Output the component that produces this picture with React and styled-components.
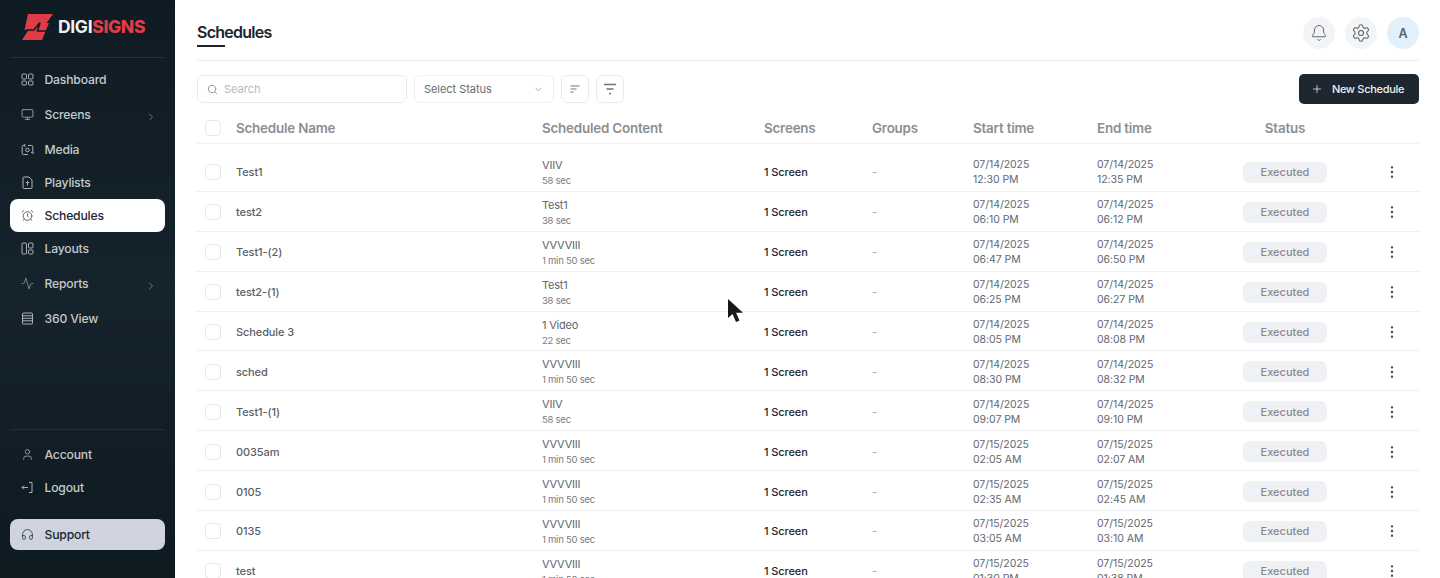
import React from "react";
import styled, { createGlobalStyle } from "styled-components";
import {
  Monitor,
  AlarmClock,
  Activity,
  User,
  Headphones,
  Bell,
  Settings,
  Search,
  ChevronRight,
  ChevronDown,
  Plus,
  EllipsisVertical,
} from "lucide-react";

const GlobalStyle = createGlobalStyle`
  html, body {
    margin: 0;
    height: 578px;
    overflow: hidden;
    background: #fff;
    font-family: Inter, "Noto Sans", sans-serif;
  }
  * { box-sizing: border-box; }
`;

const Shell = styled.div`
  display: flex;
  height: 578px;
  overflow: hidden;
  position: relative;
`;

const Sidebar = styled.aside`
  width: 175px;
  flex: none;
  display: flex;
  flex-direction: column;
  padding: 0 10px 28px;
  background: linear-gradient(180deg, #0f1b22 0%, #15232c 50%, #0e1a20 100%);
`;

const Brand = styled.div`
  height: 58px;
  display: flex;
  align-items: center;
  gap: 5px;
  padding: 0 0 4px 12px;
  border-bottom: 1px solid #22303a;
`;

const BrandText = styled.span`
  font-size: 17.5px;
  font-weight: 700;
  letter-spacing: -0.35px;
  color: #f0f1f2;
  & b {
    color: #df3c46;
    font-weight: 800;
  }
`;

const Nav = styled.nav`
  display: flex;
  flex-direction: column;
  padding-top: 5px;
`;

const NavItem = styled.div`
  display: flex;
  align-items: center;
  height: ${(p) => (p.$tall ? "37px" : "33px")};
  padding: 0 11px;
  gap: 10.5px;
  font-size: 12.2px;
  font-weight: 500;
  letter-spacing: -0.2px;
  border-radius: 8px;
  color: ${(p) => (p.$active ? "#1a2630" : "#c3c9cd")};
  background: ${(p) => (p.$active ? "#fff" : "transparent")};
  & > svg:first-child {
    flex: none;
    color: ${(p) => (p.$active ? "#3a444c" : "#aab2b7")};
  }
`;

const Arrow = styled(ChevronRight)`
  margin-left: auto;
  margin-top: 4px;
  margin-right: -3px;
  color: #a3abb0;
`;

const BottomNav = styled.div`
  margin-top: auto;
  border-top: 1px solid #22303a;
  padding-top: 8px;
  display: flex;
  flex-direction: column;
`;

const SupportButton = styled(NavItem)`
  margin-top: 15px;
  height: 31px;
  background: #cfd3dd;
  color: #1a2630;
  & > svg:first-child {
    color: #2a343c;
  }
`;

const Main = styled.main`
  flex: 1;
  min-width: 0;
  padding: 0 21px 0 22px;
`;

const Header = styled.header`
  height: 61px;
  display: flex;
  align-items: flex-start;
  justify-content: space-between;
  border-bottom: 1px solid #ebecee;
`;

const Title = styled.h1`
  margin: 22px 0 0;
  padding-bottom: 2px;
  position: relative;
  font-size: 16px;
  line-height: 21px;
  font-weight: 600;
  letter-spacing: -0.75px;
  color: #1c232b;
  &::after {
    content: "";
    position: absolute;
    left: 0;
    bottom: -2px;
    width: 28px;
    height: 2px;
    background: #1c232b;
  }
`;

const HeaderActions = styled.div`
  display: flex;
  gap: 10px;
  padding-top: 17px;
`;

const RoundButton = styled.div`
  width: 32px;
  height: 32px;
  border-radius: 50%;
  display: flex;
  align-items: center;
  justify-content: center;
  background: ${(p) => (p.$avatar ? "#e1f0fa" : "#f3f4f5")};
  color: #59636c;
  font-size: 12.5px;
  font-weight: 600;
`;

const Toolbar = styled.div`
  display: flex;
  align-items: center;
  gap: 7px;
  margin-top: 13px;
  height: 30px;
`;

const SearchBox = styled.div`
  width: 210px;
  height: 28px;
  display: flex;
  align-items: center;
  gap: 6px;
  padding: 0 9px;
  border: 1px solid #e9eaec;
  border-radius: 6px;
  font-size: 11px;
  color: #b5b9bd;
`;

const StatusSelect = styled.div`
  width: 140px;
  height: 28px;
  display: flex;
  align-items: center;
  justify-content: space-between;
  padding: 0 9px;
  border: 1px solid #eff0f1;
  border-radius: 6px;
  font-size: 11px;
  letter-spacing: -0.05px;
  color: #656b71;
`;

const IconButton = styled.div`
  width: 28px;
  height: 28px;
  display: flex;
  align-items: center;
  justify-content: center;
  border: 1px solid #eaebed;
  border-radius: 6px;
  color: #70767c;
`;

const NewButton = styled.button`
  margin-left: auto;
  width: 120px;
  height: 30px;
  display: flex;
  align-items: center;
  justify-content: center;
  gap: 9px;
  padding: 0 3px 0 0;
  border: 0;
  border-radius: 5px;
  background: #1e2730;
  color: #eef0f1;
  font-family: inherit;
  font-size: 11px;
  font-weight: 500;
  letter-spacing: -0.3px;
`;

const columns = "39px 306px 222px 108px 101px 124px 124px 128px 1fr";

const HeadRow = styled.div`
  display: grid;
  grid-template-columns: ${columns};
  align-items: center;
  height: 32px;
  margin: 8px 0;
  border-bottom: 1px solid #eff0f1;
  font-size: 13.4px;
  font-weight: 600;
  letter-spacing: -0.2px;
  color: #8b8f93;
`;

const Row = styled.div`
  display: grid;
  grid-template-columns: ${columns};
  align-items: center;
  height: 39.9px;
  padding-top: 2px;
  border-bottom: 1px solid #eeeff0;
  font-size: 11px;
  color: #60656b;
`;

const CheckCell = styled.div`
  padding-left: 8px;
`;

const Checkbox = styled.div`
  width: 16px;
  height: 16px;
  border: 1.5px solid #e6e7e9;
  border-radius: 4px;
  background: #fff;
`;

const Name = styled.div`
  font-size: 11px;
  font-weight: 500;
  letter-spacing: -0.1px;
  color: #5b6066;
`;

const Stack = styled.div`
  display: flex;
  flex-direction: column;
  padding-top: 1px;
  line-height: 15px;
  letter-spacing: -0.2px;
`;

const Small = styled.span`
  font-size: 9.5px;
  letter-spacing: -0.25px;
  color: #777c81;
`;

const ScreensCell = styled.div`
  font-size: 11px;
  font-weight: 500;
  letter-spacing: -0.1px;
  color: #23282e;
`;

const Dash = styled.div`
  color: #a0a4a8;
`;

const Time = styled.div`
  font-size: 10.5px;
  line-height: 15px;
  letter-spacing: -0.05px;
  color: #62676d;
`;

const StatusHead = styled.div`
  text-align: center;
`;

const StatusCell = styled.div`
  display: flex;
  justify-content: center;
`;

const Pill = styled.span`
  width: 84px;
  height: 21px;
  display: flex;
  align-items: center;
  justify-content: center;
  border-radius: 6px;
  background: #eff1f4;
  color: #878b91;
  font-size: 11px;
  font-weight: 500;
`;

const Kebab = styled.div`
  display: flex;
  justify-content: flex-end;
  padding-right: 19px;
  color: #43494f;
`;

const Cursor = styled.svg`
  position: absolute;
  left: 727px;
  top: 299px;
`;

const GridIcon = () => (
  <svg width="13" height="13" viewBox="0 0 13 13" fill="none" stroke="currentColor" strokeWidth="1">
    <rect x="1" y="1" width="4.5" height="5" rx="1" />
    <rect x="7.5" y="1" width="4.5" height="5" rx="1" />
    <rect x="1" y="8" width="4.5" height="4" rx="1" />
    <rect x="7.5" y="8" width="4.5" height="4" rx="1" />
  </svg>
);

const MediaIcon = () => (
  <svg width="13" height="13" viewBox="0 0 13 13" fill="none" stroke="currentColor" strokeWidth="1">
    <path d="M4 2.5H2.2a1 1 0 0 0-1 1v7a1 1 0 0 0 1 1H7" />
    <path d="M7 2.5h3.8a1 1 0 0 1 1 1v6" />
    <circle cx="6.5" cy="7" r="1.8" />
    <path d="M4.5 .8 3 2.5l1.6 1.4M10 9l1.8 1.7L13 9" />
  </svg>
);

const PlaylistIcon = () => (
  <svg width="13" height="13" viewBox="0 0 13 13" fill="none" stroke="currentColor" strokeWidth="1">
    <path d="M2 2a1 1 0 0 1 1-1h5l3 3v7.5a1 1 0 0 1-1 1H3a1 1 0 0 1-1-1z" />
    <path d="M6.5 9.5v-4M5 7l1.5-1.5L8 7" />
  </svg>
);

const LayoutIcon = () => (
  <svg width="13" height="13" viewBox="0 0 13 13" fill="none" stroke="currentColor" strokeWidth="1">
    <rect x="1" y="1" width="4.5" height="11" rx="1" />
    <rect x="7.5" y="1" width="4.5" height="5" rx="1" />
    <rect x="7.5" y="8" width="4.5" height="4" rx="1" />
  </svg>
);

const ViewIcon = () => (
  <svg width="13" height="13" viewBox="0 0 13 13" fill="none" stroke="currentColor" strokeWidth="1">
    <rect x="1.5" y="1" width="10" height="11" rx="1" />
    <path d="M1.5 3.8h10M1.5 6.3h10M1.5 8.8h10" />
  </svg>
);

const LogoutIcon = () => (
  <svg width="13" height="13" viewBox="0 0 13 13" fill="none" stroke="currentColor" strokeWidth="1">
    <path d="M8 1.5h3v10H8" />
    <path d="M1 6.5h6M3 4.5l-2 2 2 2" />
  </svg>
);

const SortIcon = () => (
  <svg width="12" height="12" viewBox="0 0 12 12" fill="none" stroke="currentColor" strokeWidth="1">
    <path d="M1.5 3h9M1.5 6h6M1.5 9h3" />
  </svg>
);

const FilterIcon = () => (
  <svg width="14" height="14" viewBox="0 0 14 14" fill="none" stroke="currentColor" strokeWidth="1.3">
    <path d="M1 2.5h12M3.5 7h7M6 11.5h2" />
  </svg>
);

const Logo = () => (
  <svg width="31" height="28" viewBox="0 0 31 28">
    <path fill="#df3c46" d="M6 1H31L24.5 10H27L20 27H0L6.5 17H2.5Z" />
    <path fill="none" stroke="#101c23" strokeWidth="1.6" d="M4 17H12L18 9.5L15.5 18H25" />
  </svg>
);

const CursorIcon = () => (
  <Cursor width="17" height="24" viewBox="0 0 17 24">
    <path fill="#16191c" d="M1 0v19l4.5-4 3.5 8 3.5-1.6-3.4-7.6H16z" />
  </Cursor>
);

const menu = [
  { label: "Dashboard", icon: <GridIcon /> },
  { label: "Screens", icon: <Monitor size={13} strokeWidth={1.5} />, more: true },
  { label: "Media", icon: <MediaIcon /> },
  { label: "Playlists", icon: <PlaylistIcon /> },
  { label: "Schedules", icon: <AlarmClock size={13} strokeWidth={1.5} />, active: true },
  { label: "Layouts", icon: <LayoutIcon /> },
  { label: "Reports", icon: <Activity size={13} strokeWidth={1.2} />, more: true },
  { label: "360 View", icon: <ViewIcon /> },
];

const vid = { title: "VVVVIII", len: "1 min 50 sec" };
const viiv = { title: "VIIV", len: "58 sec" };
const test1 = { title: "Test1", len: "38 sec" };

const rows = [
  { name: "Test1", ...viiv, date: "07/14/2025", start: "12:30 PM", end: "12:35 PM" },
  { name: "test2", ...test1, date: "07/14/2025", start: "06:10 PM", end: "06:12 PM" },
  { name: "Test1-(2)", ...vid, date: "07/14/2025", start: "06:47 PM", end: "06:50 PM" },
  { name: "test2-(1)", ...test1, date: "07/14/2025", start: "06:25 PM", end: "06:27 PM" },
  { name: "Schedule 3", title: "1 Video", len: "22 sec", date: "07/14/2025", start: "08:05 PM", end: "08:08 PM" },
  { name: "sched", ...vid, date: "07/14/2025", start: "08:30 PM", end: "08:32 PM" },
  { name: "Test1-(1)", ...viiv, date: "07/14/2025", start: "09:07 PM", end: "09:10 PM" },
  { name: "0035am", ...vid, date: "07/15/2025", start: "02:05 AM", end: "02:07 AM" },
  { name: "0105", ...vid, date: "07/15/2025", start: "02:35 AM", end: "02:45 AM" },
  { name: "0135", ...vid, date: "07/15/2025", start: "03:05 AM", end: "03:10 AM" },
  { name: "test", ...vid, date: "07/15/2025", start: "01:30 PM", end: "01:38 PM" },
];

export default function App() {
  return (
    <Shell>
      <GlobalStyle />
      <Sidebar>
        <Brand>
          <Logo />
          <BrandText>
            DIGI<b>SIGNS</b>
          </BrandText>
        </Brand>
        <Nav>
          {menu.map((item) => (
            <NavItem key={item.label} $tall={item.more} $active={item.active}>
              {item.icon}
              {item.label}
              {item.more && <Arrow size={12} strokeWidth={1.3} />}
            </NavItem>
          ))}
        </Nav>
        <BottomNav>
          <NavItem>
            <User size={13} strokeWidth={1.4} />
            Account
          </NavItem>
          <NavItem>
            <LogoutIcon />
            Logout
          </NavItem>
          <SupportButton>
            <Headphones size={13} strokeWidth={1.5} />
            Support
          </SupportButton>
        </BottomNav>
      </Sidebar>

      <Main>
        <Header>
          <Title>Schedules</Title>
          <HeaderActions>
            <RoundButton>
              <Bell size={18} strokeWidth={1.3} />
            </RoundButton>
            <RoundButton>
              <Settings size={20} strokeWidth={1.3} />
            </RoundButton>
            <RoundButton $avatar>A</RoundButton>
          </HeaderActions>
        </Header>

        <Toolbar>
          <SearchBox>
            <Search size={11} color="#8b9096" />
            Search
          </SearchBox>
          <StatusSelect>
            Select Status
            <ChevronDown size={11} color="#a3a7ab" />
          </StatusSelect>
          <IconButton>
            <SortIcon />
          </IconButton>
          <IconButton>
            <FilterIcon />
          </IconButton>
          <NewButton>
            <Plus size={12} strokeWidth={1.5} />
            New Schedule
          </NewButton>
        </Toolbar>

        <HeadRow>
          <CheckCell>
            <Checkbox />
          </CheckCell>
          <div>Schedule Name</div>
          <div>Scheduled Content</div>
          <div>Screens</div>
          <div>Groups</div>
          <div>Start time</div>
          <div>End time</div>
          <StatusHead>Status</StatusHead>
        </HeadRow>

        {rows.map((row) => (
          <Row key={row.name}>
            <CheckCell>
              <Checkbox />
            </CheckCell>
            <Name>{row.name}</Name>
            <Stack>
              <span>{row.title}</span>
              <Small>{row.len}</Small>
            </Stack>
            <ScreensCell>1 Screen</ScreensCell>
            <Dash>-</Dash>
            <Time>
              {row.date}
              <br />
              {row.start}
            </Time>
            <Time>
              {row.date}
              <br />
              {row.end}
            </Time>
            <StatusCell>
              <Pill>Executed</Pill>
            </StatusCell>
            <Kebab>
              <EllipsisVertical size={16} strokeWidth={1.6} />
            </Kebab>
          </Row>
        ))}
      </Main>
      <CursorIcon />
    </Shell>
  );
}
